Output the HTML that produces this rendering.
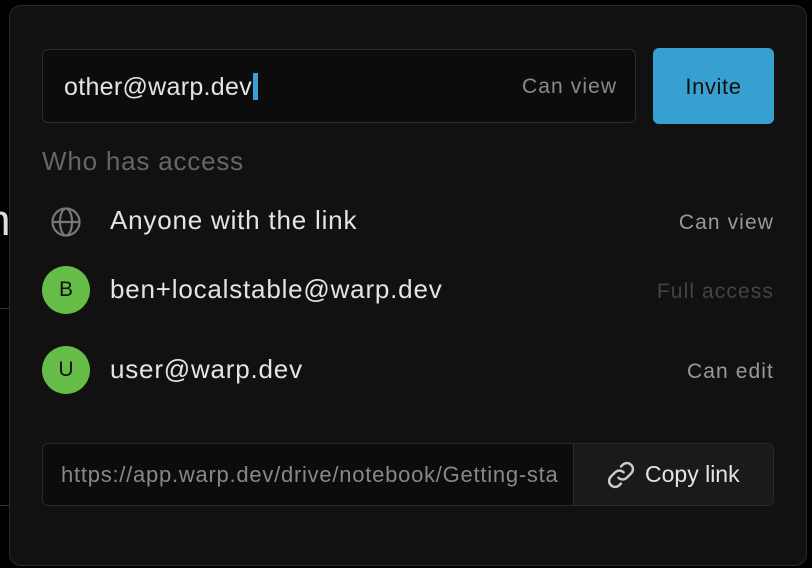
<!DOCTYPE html>
<html><head><style>
*{margin:0;padding:0;box-sizing:border-box}
body{width:812px;height:568px;background:#000;position:relative;overflow:hidden;font-family:"Liberation Sans",sans-serif;}
.a{position:absolute;white-space:nowrap}
.panel{position:absolute;left:9px;top:5px;width:798px;height:561px;background:#111;border:1px solid #2a2a2a;border-radius:12px}
.av{position:absolute;width:48px;height:48px;border-radius:50%;background:#65bd48;color:#111;font-size:21px;text-align:center;line-height:48px}
.big{font-size:26px;letter-spacing:0.8px;color:#e4e4e4}
.lab{font-size:21px;letter-spacing:1.1px}
</style></head><body>
<div class="a" style="left:-14px;top:196px;color:#ddd;font-size:44px">n</div>
<div class="a" style="left:0;top:308px;width:9px;height:1px;background:#333"></div>
<div class="a" style="left:0;top:505px;width:9px;height:1px;background:#333"></div>
<div class="panel"></div>
<div class="a" style="left:42px;top:49px;width:594px;height:74px;background:#0c0c0c;border:1px solid #2c2c2c;border-radius:6px"></div>
<div class="a" style="left:64px;top:73px;color:#e4e4e4;font-size:25px;letter-spacing:0.3px">other@warp.dev<span style="display:inline-block;width:5px;height:27px;background:#3aa0d6;vertical-align:-5px;margin-left:1px"></span></div>
<div class="a lab" style="left:522px;top:75px;color:#8a8a8a">Can view</div>
<div class="a" style="left:653px;top:48px;width:121px;height:76px;background:#38a0d0;border-radius:6px;color:#111;font-size:22px;letter-spacing:0.6px;text-align:center;line-height:78px">Invite</div>
<div class="a big" style="left:42px;top:146px;color:#666">Who has access</div>
<svg class="a" style="left:50px;top:206px" width="32" height="32" viewBox="0 0 32 32" fill="none" stroke="#777" stroke-width="2.2"><circle cx="16" cy="16" r="13.5"/><ellipse cx="16" cy="16" rx="6" ry="13.5"/><path d="M2.5 16h27"/></svg>
<div class="a big" style="left:110px;top:205px">Anyone with the link</div>
<div class="a lab" style="right:38px;top:211px;color:#999">Can view</div>
<div class="av" style="left:42px;top:266px">B</div>
<div class="a big" style="left:110px;top:274px">ben+localstable@warp.dev</div>
<div class="a lab" style="right:38px;top:280px;color:#444">Full access</div>
<div class="av" style="left:42px;top:346px">U</div>
<div class="a big" style="left:110px;top:354px">user@warp.dev</div>
<div class="a lab" style="right:38px;top:360px;color:#999">Can edit</div>
<div class="a" style="left:42px;top:443px;width:732px;height:63px;background:#0c0c0c;border:1px solid #2a2a2a;border-radius:6px;overflow:hidden">
 <div class="a" style="left:18px;top:18px;width:497px;overflow:hidden;color:#888;font-size:22px;letter-spacing:0.75px">https://app.warp.dev/drive/notebook/Getting-started</div>
 <div class="a" style="left:530px;top:0;width:202px;height:63px;background:#1a1a1a;border-left:1px solid #2a2a2a"></div>
</div>
<svg class="a" style="left:605px;top:459px" width="32" height="32" viewBox="0 0 24 24" fill="none" stroke="#ccc" stroke-width="1.8" stroke-linecap="round"><path d="M10 14a4.5 4.5 0 0 0 6.4 0l3.2-3.2a4.5 4.5 0 0 0-6.4-6.4l-1.2 1.2"/><path d="M14 10a4.5 4.5 0 0 0-6.4 0l-3.2 3.2a4.5 4.5 0 0 0 6.4 6.4l1.2-1.2"/></svg>
<div class="a" style="left:645px;top:461px;color:#e4e4e4;font-size:23px">Copy link</div>
</body></html>
